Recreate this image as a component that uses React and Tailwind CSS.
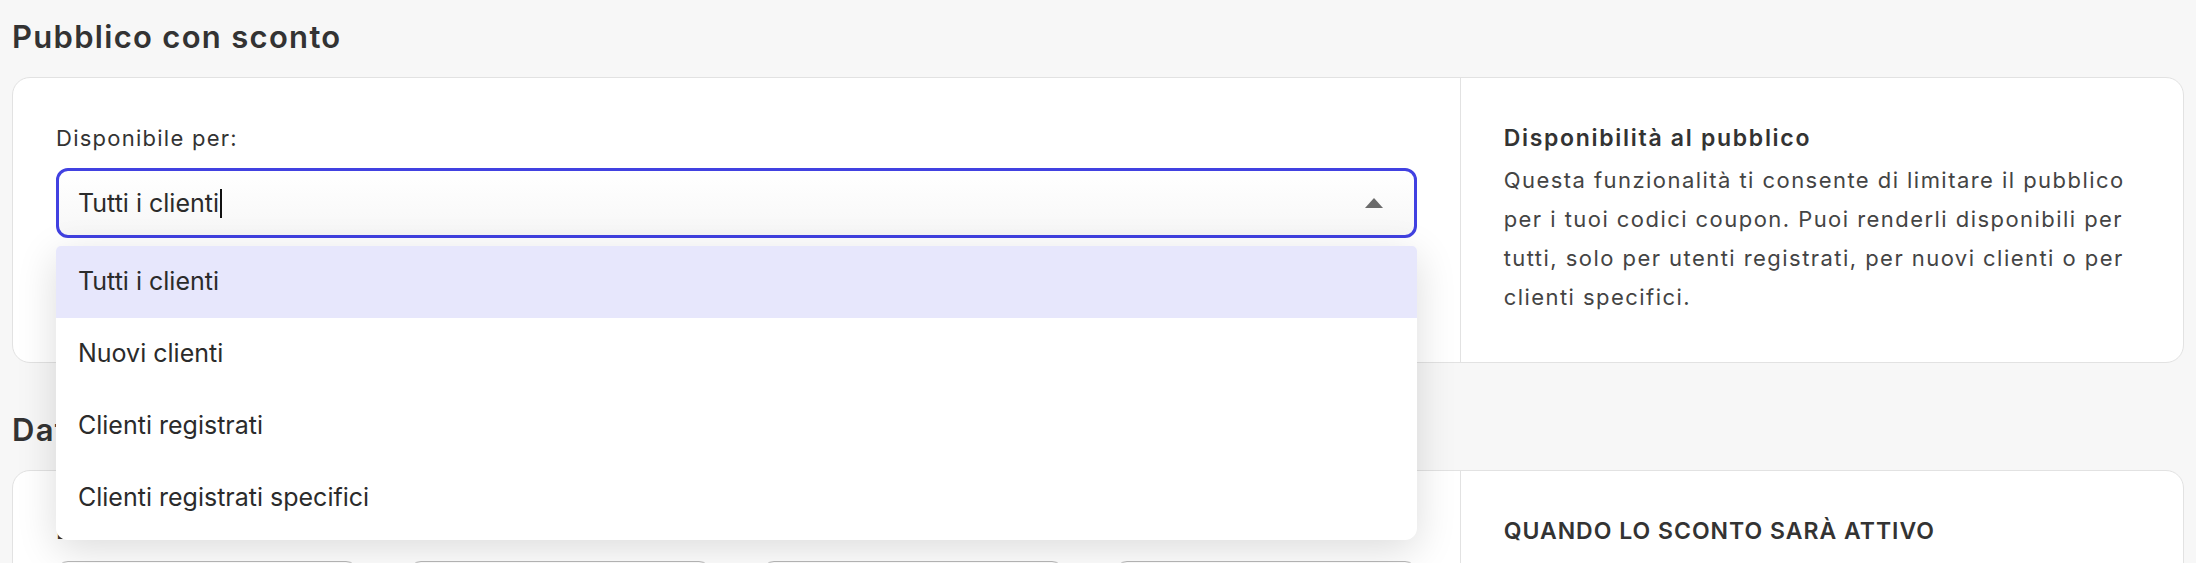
import React from "react";

const options = [
  "Tutti i clienti",
  "Nuovi clienti",
  "Clienti registrati",
  "Clienti registrati specifici",
];

function InfoIcon() {
  return (
    <svg width="18" height="18" viewBox="0 0 24 24" fill="none" stroke="currentColor" strokeWidth="2.2" className="inline-block">
      <circle cx="12" cy="12" r="9.5" />
      <path d="M12 11v6" strokeLinecap="round" />
      <circle cx="12" cy="7.5" r="1.2" fill="currentColor" stroke="none" />
    </svg>
  );
}

function AudienceSelect() {
  return (
    <div className="relative mt-[13.5px]">
      <div className="flex h-[70px] items-center justify-between rounded-[12px] border-[3px] border-[#4141e1] bg-gradient-to-b from-white to-[#f7f7f7] pl-[19px] pr-[31px]">
        <span className="flex items-center text-[25px] leading-[36px] text-[#2b2b2b]">
          Tutti i clienti
          <span className="ml-px inline-block h-[29px] w-[2px] bg-[#111]" />
        </span>
        <svg width="18" height="10" viewBox="0 0 18 10" className="shrink-0">
          <path d="M9 0 L18 10 L0 10 Z" fill="#6b6b6b" />
        </svg>
      </div>
      <ul className="absolute left-0 right-0 top-[78px] z-10 overflow-hidden rounded-b-[12px] rounded-t-[5px] bg-white pb-[6px] shadow-[0_10px_40px_rgba(0,0,0,0.14)]">
        {options.map((o, i) => (
          <li
            key={o}
            className={
              i === 0
                ? "flex h-[72px] items-center bg-[#e7e7fc] pl-[22px] text-[25px] text-[#2b2b2b]"
                : "flex h-[72px] items-center pl-[22px] text-[25px] text-[#2b2b2b]"
            }
          >
            {o}
          </li>
        ))}
      </ul>
    </div>
  );
}

function DateField({ label, info }) {
  return (
    <div>
      <div className="flex items-center gap-2 text-[22px] leading-[31.5px] tracking-[1.25px] text-[#333]">
        {label}
        {info && <InfoIcon />}
      </div>
      <div className="mt-[13.5px] grid grid-cols-2 gap-[51px]">
        <div className="h-[70px] rounded-[12px] border-[1.5px] border-[#b9b9b9] bg-white" />
        <div className="h-[70px] rounded-[12px] border-[1.5px] border-[#b9b9b9] bg-white" />
      </div>
    </div>
  );
}

export default function App() {
  return (
    <div className="min-h-screen bg-[#f7f7f7] px-3 pt-[14px] pb-10 font-['Inter',sans-serif] text-[#333]">
      <h2 className="mb-[18px] text-[31px] font-semibold leading-[45px] tracking-[1.3px] text-[#333]">
        Pubblico con sconto
      </h2>
      <div className="grid grid-cols-3 rounded-[18px] border border-[#e2e2e2] bg-white">
        <div className="col-span-2 px-[43px] py-[45px]">
          <label className="block text-[22px] leading-[31.5px] tracking-[1.25px] text-[#333]">
            Disponibile per:
          </label>
          <AudienceSelect />
        </div>
        <div className="border-l border-[#e2e2e2] px-[43px] py-[45px]">
          <h3 className="text-[23px] font-semibold leading-[31.5px] tracking-[1.7px] text-[#333]">
            Disponibilità al pubblico
          </h3>
          <p className="mt-[6px] text-[22px] leading-[39px] tracking-[1.45px] text-[#444]">
            Questa funzionalità ti consente di limitare il pubblico
            <br />
            per i tuoi codici coupon. Puoi renderli disponibili per
            <br />
            tutti, solo per utenti registrati, per nuovi clienti o per
            <br />
            clienti specifici.
          </p>
        </div>
      </div>

      <h2 className="mb-[18px] mt-[44px] text-[31px] font-semibold leading-[45px] tracking-[1.3px] text-[#333]">
        Date di validità
      </h2>
      <div className="grid grid-cols-3 rounded-[18px] border border-[#e2e2e2] bg-white">
        <div className="col-span-2 grid grid-cols-2 gap-[51px] px-[43px] py-[45px]">
          <DateField label="Data di inizio" />
          <DateField label="Data di scadenza" info />
        </div>
        <div className="border-l border-[#e2e2e2] px-[43px] py-[45px]">
          <h3 className="text-[23px] font-semibold uppercase leading-[31.5px] tracking-[1px] text-[#333]">
            Quando lo sconto sarà attivo
          </h3>
          <p className="mt-[6px] text-[22px] leading-[39px] tracking-[1.45px] text-[#444]">
            Imposta la data e l'ora di inizio e di scadenza dello sconto.
          </p>
        </div>
      </div>
    </div>
  );
}
